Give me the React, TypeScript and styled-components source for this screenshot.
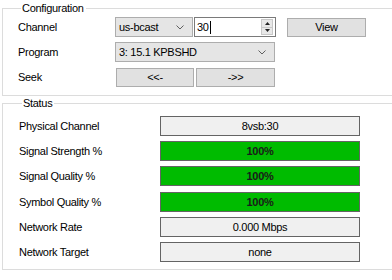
import styled, { createGlobalStyle } from "styled-components";
import { Fragment } from "react";

const GlobalStyle = createGlobalStyle`
  html, body {
    margin: 0;
    padding: 0;
    background: #fff;
  }
  body {
    font-family: "Liberation Sans", Arial, sans-serif;
    font-size: 11px;
    letter-spacing: -0.3px;
    color: #000;
  }
`;

const Window = styled.div`
  width: 392px;
  height: 280px;
  overflow: hidden;
  padding-top: 1px;
  box-sizing: border-box;
`;

const Group = styled.fieldset<{ $pad: string }>`
  margin: 0 -20px 0 2px;
  padding: ${(p) => p.$pad};
  border: 1px solid #dcdcdc;
  min-width: 0;
`;

const Legend = styled.legend`
  padding: 0 2px 0 1px;
  margin-left: 3px;
  font-size: 11px;
  line-height: 14px;
`;

const ConfigGrid = styled.div`
  display: grid;
  grid-template-columns: 97px auto;
  grid-auto-rows: 20px;
  row-gap: 5px;
  align-items: center;
`;

const Label = styled.div`
  font-size: 11px;
  line-height: 14px;
  white-space: nowrap;
`;

const Controls = styled.div`
  display: flex;
  align-items: center;
  height: 20px;
`;

const Combo = styled.div<{ $w: number }>`
  width: ${(p) => p.$w}px;
  height: 20px;
  box-sizing: border-box;
  border: 1px solid #adadad;
  background: #e5e5e5;
  display: flex;
  align-items: center;
  justify-content: space-between;
  padding: 0 8px 0 3px;
  font-size: 11px;
`;

const Spinner = styled.div`
  width: 82px;
  height: 20px;
  box-sizing: border-box;
  margin-left: 1px;
  border: 1px solid #7a7a7a;
  background: #fff;
  display: flex;
  align-items: center;
  padding-left: 2px;
`;

const SpinText = styled.span`
  flex: 1;
  font-size: 11px;
  display: flex;
  align-items: center;
`;

const Caret = styled.span`
  display: inline-block;
  width: 1px;
  height: 13px;
  margin-left: 1px;
  background: #000;
`;

const SpinButtons = styled.div`
  width: 12px;
  height: 16px;
  margin-right: 2px;
  display: flex;
  flex-direction: column;
  border: 1px solid #c8c8c8;
  box-sizing: border-box;
`;

const SpinBtn = styled.div`
  flex: 1;
  background: #e8e8e8;
  display: flex;
  align-items: center;
  justify-content: center;
  & + & {
    border-top: 1px solid #c8c8c8;
  }
`;

const Button = styled.div<{ $w: number; $ml?: number }>`
  width: ${(p) => p.$w}px;
  height: 19px;
  margin-left: ${(p) => p.$ml ?? 0}px;
  box-sizing: border-box;
  border: 1px solid #adadad;
  background: #e1e1e1;
  display: flex;
  align-items: center;
  justify-content: center;
  font-size: 11px;
`;

const StatusGrid = styled.div`
  display: grid;
  grid-template-columns: 141px 200px;
  grid-auto-rows: 20px;
  row-gap: 5.2px;
  align-items: center;
`;

const Meter = styled.div<{ $ok?: boolean }>`
  height: 20px;
  box-sizing: border-box;
  border: 1px solid #646464;
  background: ${(p) => (p.$ok ? "#00bb00" : "#f0f0f0")};
  display: flex;
  align-items: center;
  justify-content: center;
  font-size: 11px;
  font-weight: ${(p) => (p.$ok ? 700 : 400)};
  color: ${(p) => (p.$ok ? "#1a1a1a" : "#000")};
`;

const Chevron = () => (
  <svg width="8" height="5" viewBox="0 0 8 5">
    <polyline points="0.5,0.5 4,4 7.5,0.5" fill="none" stroke="#606060" strokeWidth="1" />
  </svg>
);

const Tri = ({ up }: { up?: boolean }) => (
  <svg width="5" height="3" viewBox="0 0 5 3">
    <polygon points={up ? "0,3 5,3 2.5,0" : "0,0 5,0 2.5,3"} fill="#222" />
  </svg>
);

const status: [string, string, boolean][] = [
  ["Physical Channel", "8vsb:30", false],
  ["Signal Strength %", "100%", true],
  ["Signal Quality %", "100%", true],
  ["Symbol Quality %", "100%", true],
  ["Network Rate", "0.000 Mbps", false],
  ["Network Target", "none", false],
];

export default function App() {
  return (
    <Window>
      <GlobalStyle />
      <Group $pad="2px 0 8px 15px">
        <Legend>Configuration</Legend>
        <ConfigGrid>
          <Label>Channel</Label>
          <Controls>
            <Combo $w={78}>
              us-bcast
              <Chevron />
            </Combo>
            <Spinner>
              <SpinText>
                30
                <Caret />
              </SpinText>
              <SpinButtons>
                <SpinBtn>
                  <Tri up />
                </SpinBtn>
                <SpinBtn>
                  <Tri />
                </SpinBtn>
              </SpinButtons>
            </Spinner>
            <Button $w={79} $ml={11}>
              View
            </Button>
          </Controls>
          <Label>Program</Label>
          <Controls>
            <Combo $w={160}>
              3: 15.1 KPBSHD
              <Chevron />
            </Combo>
          </Controls>
          <Label>Seek</Label>
          <Controls>
            <Button $w={78} $ml={1}>
              &lt;&lt;-
            </Button>
            <Button $w={79} $ml={2}>
              -&gt;&gt;
            </Button>
          </Controls>
        </ConfigGrid>
      </Group>
      <Group $pad="6px 0 7px 16px">
        <Legend>Status</Legend>
        <StatusGrid>
          {status.map(([name, value, ok]) => (
            <Fragment key={name}>
              <Label>{name}</Label>
              <Meter $ok={ok}>{value}</Meter>
            </Fragment>
          ))}
        </StatusGrid>
      </Group>
    </Window>
  );
}
